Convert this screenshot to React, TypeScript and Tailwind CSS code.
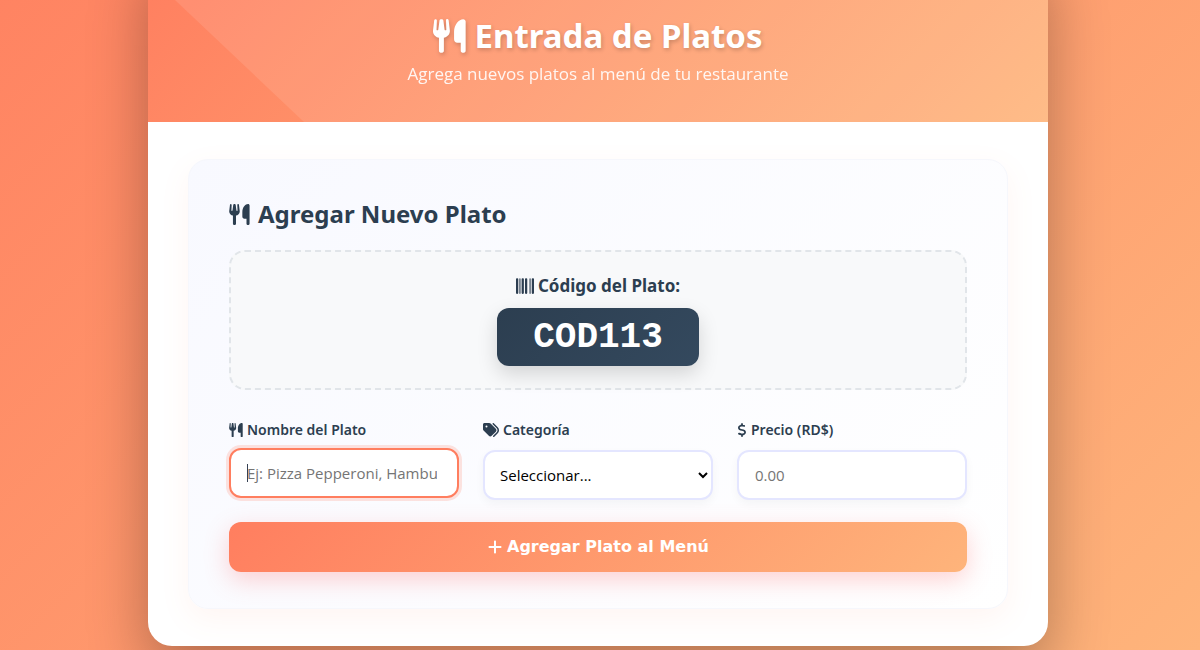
import { useState } from 'react';
import type { FormEvent } from 'react';
import { FaBarcode, FaDollarSign, FaPlus, FaTags } from 'react-icons/fa6';

const categories = ['Entradas', 'Platos fuertes', 'Postres', 'Bebidas'];

const fieldClass =
  "block h-[50px] w-full rounded-xl border-2 border-[#e4e6ff] bg-white font-['Open_Sans',sans-serif] text-[15px] shadow-[0_4px_10px_rgba(0,0,0,0.04)] outline-none placeholder:text-[#757575] focus:-translate-y-0.5 focus:border-[#ff7e5f] focus:shadow-[0_0_0_3px_rgba(255,126,95,0.2)]";

const labelClass = 'mb-2 flex h-6 items-center gap-1 text-sm font-semibold text-[#2c3e50]';

function UtensilsIcon({ className }: { className?: string }) {
  return (
    <svg viewBox="0 0 94 96" fill="currentColor" aria-hidden="true" className={className}>
      <path d="M7 0C9 0 11 1.500 11 4L10 30C10 32 14.500 32 15 30L18.500 3.500C19 -.8 29 -.8 29.500 3.500L33 30C33.500 32 38 32 38 30L37 4C37 -1 43.500 -1.500 44.500 3L48 32C49 44 40 51 31 53V90C31 98 17 98 17 90V53C8 51 -1 44 0 32L3.500 3C4 1 5.500 0 7 0Z" />
      <path d="M86 0C90 0 93 3 93 7V90C93 98 79 98 79 90V67H69C64 67 60 63 60 57V36C60 15 74 0 86 0Z" />
    </svg>
  );
}

export default function App() {
  const [category, setCategory] = useState('');
  const [price, setPrice] = useState('');

  const handleSubmit = (e: FormEvent) => {
    e.preventDefault();
  };

  return (
    <div className="-mt-52 flex min-h-[calc(100vh+208px)] justify-center overflow-hidden bg-linear-[135deg] from-[#ff7e5f] to-[#feb47b] pt-39 pr-1 pb-1 font-['Noto_Sans',sans-serif]">
      <main className="w-full max-w-[900px] overflow-hidden rounded-3xl bg-white shadow-[0_25px_60px_rgba(0,0,0,0.3)]">
        <header className="relative bg-linear-[135deg] from-[#ff7e5f] to-[#feb47b] px-10 pt-16 pb-9 text-center text-white">
          <div className="absolute inset-x-0 top-13 bottom-0 bg-white/10 [clip-path:polygon(27px_0,100%_0,100%_100%,156px_100%)]" />
          <div className="relative">
            <h1 className="flex h-12 items-center justify-center gap-2 text-[33px] font-bold text-shadow-[1px_2px_4px_rgba(0,0,0,0.2)]">
              <UtensilsIcon className="h-[34px] w-[33px] drop-shadow-[1px_2px_2px_rgba(0,0,0,0.2)]" />
              Entrada de Platos
            </h1>
            <p className="mt-0.5 font-['Open_Sans',sans-serif] text-[17px] leading-6 opacity-90">
              Agrega nuevos platos al menú de tu restaurante
            </p>
          </div>
        </header>

        <div className="px-10 py-[37px]">
          <form
            onSubmit={handleSubmit}
            className="rounded-[20px] border border-[#f6f7fc] bg-linear-[135deg] from-[#f8f9ff] to-white px-10 py-9 shadow-[0_10px_30px_rgba(255,126,95,0.08)]"
          >
            <h2 className="mb-[18px] flex h-9 items-center gap-2 text-2xl font-bold text-[#2c3e50]">
              <UtensilsIcon className="h-[21px] w-[21px]" />
              Agregar Nuevo Plato
            </h2>

            <div className="mb-7 flex flex-col items-center rounded-2xl border-2 border-dashed border-[#e1e5e9] bg-[#f8f9fa] pt-5 pb-[22px]">
              <h3 className="mb-2 flex h-7 items-center gap-1 text-[17px] font-bold text-[#2c3e50]">
                <FaBarcode className="size-[18px]" />
                Código del Plato:
              </h3>
              <output className="block rounded-xl bg-linear-[135deg] from-[#2c3e50] to-[#34495e] px-9 pt-2.5 pb-2 font-['Liberation_Mono',monospace] text-4xl font-bold text-white shadow-[0_8px_20px_rgba(0,0,0,0.15)]">
                COD113
              </output>
            </div>

            <div className="grid grid-cols-3 gap-6">
              <div>
                <label htmlFor="nombre" className={labelClass}>
                  <UtensilsIcon className="size-3.5" />
                  Nombre del Plato
                </label>
                <div className="relative">
                  <input
                    id="nombre"
                    type="text"
                    autoFocus
                    placeholder="Ej: Pizza Pepperoni, Hamburguesa..."
                    className={`${fieldClass} peer pr-5 pl-4 placeholder-shown:caret-transparent`}
                  />
                  <span className="pointer-events-none absolute top-3.5 left-[18px] hidden h-[18px] w-px bg-gray-700 peer-focus:peer-placeholder-shown:block" />
                </div>
              </div>
              <div>
                <label htmlFor="categoria" className={labelClass}>
                  <FaTags className="size-4" />
                  Categoría
                </label>
                <select
                  id="categoria"
                  value={category}
                  onChange={(e) => setCategory(e.target.value)}
                  className={`${fieldClass} pl-[11px] text-black`}
                >
                  <option value="">Seleccionar...</option>
                  {categories.map((item) => (
                    <option key={item} value={item}>
                      {item}
                    </option>
                  ))}
                </select>
              </div>
              <div>
                <label htmlFor="precio" className={labelClass}>
                  <FaDollarSign className="h-3.5 w-2.5" />
                  Precio (RD$)
                </label>
                <input
                  id="precio"
                  type="number"
                  step="0.01"
                  placeholder="0.00"
                  value={price}
                  onChange={(e) => setPrice(e.target.value)}
                  className={`${fieldClass} px-4`}
                />
              </div>
            </div>

            <button
              type="submit"
              className="mt-[22px] flex h-[50px] w-full items-center justify-center gap-1 rounded-xl bg-linear-[135deg] from-[#ff7e5f] to-[#feb47b] font-['DejaVu_Sans',sans-serif] text-base font-bold text-white shadow-[0_8px_25px_rgba(255,107,107,0.3)]"
            >
              <FaPlus className="size-4" />
              Agregar Plato al Menú
            </button>
          </form>
        </div>
      </main>
    </div>
  );
}
